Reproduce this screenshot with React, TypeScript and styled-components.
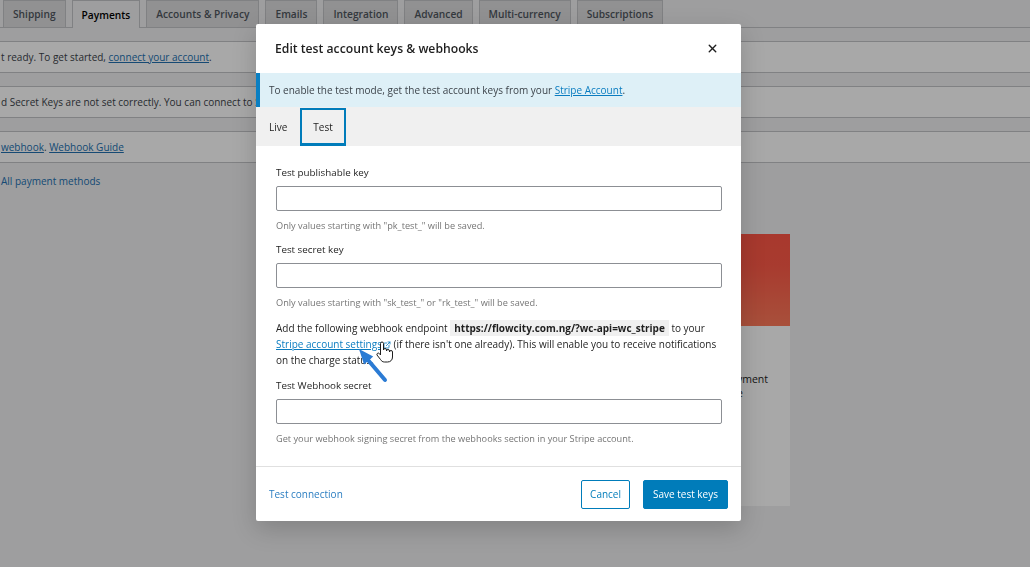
import React from "react";
import styled, { createGlobalStyle } from "styled-components";
import { X, ExternalLink } from "lucide-react";

const GlobalStyle = createGlobalStyle`
  html, body {
    margin: 0;
    padding: 0;
    width: 1030px;
    height: 567px;
    overflow: hidden;
    background: #f0f0f1;
    font-family: "Open Sans", "Noto Sans", sans-serif;
  }
`;

const Page = styled.div`
  width: 1030px;
  height: 567px;
  background: #f0f0f1;
  color: #3c434a;
`;

const TabBar = styled.nav`
  display: flex;
  gap: 6px;
  height: 28px;
  padding-left: 3px;
  border-bottom: 1px solid #c3c4c7;
  box-sizing: border-box;
`;

const PageTab = styled.div<{ $active?: boolean }>`
  display: flex;
  align-items: center;
  padding: 0 9px;
  height: ${(p) => (p.$active ? "28px" : "27px")};
  border: 1px solid #c3c4c7;
  border-bottom: none;
  background: ${(p) => (p.$active ? "#f0f0f1" : "#dcdcde")};
  color: ${(p) => (p.$active ? "#000" : "#50575e")};
  font-size: 10.2px;
  font-weight: 600;
  box-sizing: border-box;
`;

const NoticeList = styled.div`
  display: flex;
  flex-direction: column;
  gap: 13px;
  margin-top: 13px;
`;

const Notice = styled.div`
  height: 32px;
  display: flex;
  align-items: center;
  background: #fff;
  border-top: 1px solid #c3c4c7;
  border-bottom: 1px solid #c3c4c7;
  box-sizing: border-box;
  font-size: 10px;
  white-space: nowrap;
  padding-left: 1px;
`;

const PageLink = styled.a`
  color: #2271b1;
  text-decoration: underline;
`;

const AllMethods = styled.div`
  margin-top: 11px;
  font-size: 10px;
  color: #2271b1;
  padding-left: 1px;
`;

const CardRow = styled.div`
  display: flex;
  padding-left: 560px;
  margin-top: 46px;
`;

const MethodCard = styled.div`
  width: 230px;
  height: 272px;
  background: #fff;
  display: flex;
  flex-direction: column;
`;

const CardBanner = styled.div`
  height: 92px;
  background: linear-gradient(180deg, #ff5646 0%, #ff5a48 35%, #ff7a5a 100%);
`;

const CardBody = styled.div`
  padding-top: 46px;
  font-size: 10.5px;
  line-height: 14px;
  color: #1e1e1e;
  display: flex;
  flex-direction: column;
`;

const CardLine = styled.div<{ $inset: number }>`
  text-align: right;
  padding-right: ${(p) => p.$inset}px;
  white-space: nowrap;
`;

const Overlay = styled.div`
  position: fixed;
  inset: 0;
  background: rgba(0, 0, 0, 0.34);
`;

const Modal = styled.div`
  position: absolute;
  left: 256px;
  top: 24px;
  width: 485px;
  height: 497px;
  background: #fff;
  border-radius: 2px;
  box-shadow: 0 8px 24px rgba(0, 0, 0, 0.18);
  display: flex;
  flex-direction: column;
  color: #1e1e1e;
`;

const ModalHeader = styled.header`
  height: 49px;
  display: flex;
  align-items: center;
  justify-content: space-between;
  padding: 0 22px 0 19px;
  flex-shrink: 0;
`;

const ModalTitle = styled.h1`
  margin: 0;
  font-size: 12.2px;
  font-weight: 600;
  color: #1e1e1e;
`;

const CloseButton = styled.button`
  border: none;
  background: none;
  padding: 0;
  display: flex;
  color: #1e1e1e;
`;

const InfoNotice = styled.div`
  height: 34px;
  display: flex;
  align-items: center;
  background: #def0f7;
  border-left: 4px solid #0a7fc2;
  padding-left: 9px;
  font-size: 10px;
  color: #3c434a;
  flex-shrink: 0;
`;

const BlueLink = styled.a`
  color: #0a7cc0;
  text-decoration: underline;
`;

const ModeTabs = styled.div`
  height: 39px;
  display: flex;
  align-items: stretch;
  background: #f0f0f0;
  flex-shrink: 0;
`;

const ModeTab = styled.div<{ $active?: boolean }>`
  display: flex;
  align-items: center;
  padding: 0 ${(p) => (p.$active ? "11px" : "13px")};
  margin: ${(p) => (p.$active ? "1px 0 0" : "0")};
  font-size: 10px;
  font-weight: 500;
  color: #1e1e1e;
  border: ${(p) => (p.$active ? "2px solid #007cba" : "none")};
  border-bottom-width: ${(p) => (p.$active ? "3px" : "0")};
  box-sizing: border-box;
`;

const ModalBody = styled.div`
  padding: 19px 19px 11px 20px;
  border-bottom: 1px solid #e0e0e0;
  display: flex;
  flex-direction: column;
`;

const FieldLabel = styled.label`
  font-size: 9.8px;
  line-height: 16px;
  color: #1e1e1e;
  margin-bottom: 5px;
`;

const TextInput = styled.input`
  height: 25px;
  box-sizing: border-box;
  border: 1px solid #8c8f94;
  border-radius: 2px;
  width: 100%;
  margin: 0;
`;

const Help = styled.p`
  margin: 8px 0 9px;
  font-size: 9.2px;
  line-height: 14px;
  color: #757575;
`;

const Instructions = styled.p`
  margin: 1px 0 10px;
  font-size: 10px;
  line-height: 16px;
  color: #1e1e1e;
  white-space: nowrap;
`;

const Endpoint = styled.code`
  font-family: "Open Sans", "Noto Sans", sans-serif;
  font-weight: 700;
  background: #f0f0f0;
  padding: 1px 4px;
`;

const ExtIcon = styled(ExternalLink)`
  vertical-align: -1px;
  margin-left: 1px;
`;

const ModalFooter = styled.footer`
  flex: 1;
  display: flex;
  align-items: center;
  justify-content: space-between;
  padding: 0 13px;
`;

const FooterLink = styled.a`
  font-size: 10px;
  color: #2a7dc1;
  text-decoration: none;
`;

const ButtonGroup = styled.div`
  display: flex;
  gap: 13px;
`;

const Button = styled.button<{ $primary?: boolean }>`
  height: 29px;
  padding: 0 ${(p) => (p.$primary ? "9px" : "8px")};
  border-radius: 2px;
  font-family: inherit;
  font-size: 10px;
  border: 1px solid #007cba;
  background: ${(p) => (p.$primary ? "#007cba" : "#fff")};
  color: ${(p) => (p.$primary ? "#fff" : "#007cba")};
`;

const Pointer = styled.svg`
  position: absolute;
  left: 340px;
  top: 335px;
  overflow: visible;
`;

const tabs = [
  "Shipping",
  "Payments",
  "Accounts & Privacy",
  "Emails",
  "Integration",
  "Advanced",
  "Multi-currency",
  "Subscriptions",
];

export default function App() {
  return (
    <>
      <GlobalStyle />
      <Page>
        <TabBar>
          {tabs.map((t) => (
            <PageTab key={t} $active={t === "Payments"}>
              {t}
            </PageTab>
          ))}
        </TabBar>
        <NoticeList>
          <Notice>
            t ready. To get started,&nbsp;<PageLink>connect your account</PageLink>.
          </Notice>
          <Notice>
            d Secret Keys are not set correctly. You can connect to Stripe with a new account.
          </Notice>
          <Notice>
            <PageLink>webhook</PageLink>.&nbsp;<PageLink>Webhook Guide</PageLink>
          </Notice>
        </NoticeList>
        <AllMethods>All payment methods</AllMethods>
        <CardRow>
          <MethodCard>
            <CardBanner />
            <CardBody>
              <CardLine $inset={22}>Accept credit card payment</CardLine>
              <CardLine $inset={47}>methods from one place</CardLine>
            </CardBody>
          </MethodCard>
        </CardRow>
      </Page>
      <Overlay />
      <Modal>
        <ModalHeader>
          <ModalTitle>Edit test account keys &amp; webhooks</ModalTitle>
          <CloseButton aria-label="Close">
            <X size={13} strokeWidth={2.6} />
          </CloseButton>
        </ModalHeader>
        <InfoNotice>
          To enable the test mode, get the test account keys from your&nbsp;
          <BlueLink>Stripe Account</BlueLink>.
        </InfoNotice>
        <ModeTabs>
          <ModeTab>Live</ModeTab>
          <ModeTab $active>Test</ModeTab>
        </ModeTabs>
        <ModalBody>
          <FieldLabel>Test publishable key</FieldLabel>
          <TextInput />
          <Help>Only values starting with "pk_test_" will be saved.</Help>
          <FieldLabel>Test secret key</FieldLabel>
          <TextInput />
          <Help>Only values starting with "sk_test_" or "rk_test_" will be saved.</Help>
          <Instructions>
            Add the following webhook endpoint <Endpoint>https://flowcity.com.ng/?wc-api=wc_stripe</Endpoint> to your
            <br />
            <BlueLink>Stripe account settings</BlueLink>
            <ExtIcon size={8} color="#0a7cc0" strokeWidth={2.5} /> (if there isn't one already). This will enable you to
            receive notifications
            <br />
            on the charge status.
          </Instructions>
          <FieldLabel>Test Webhook secret</FieldLabel>
          <TextInput />
          <Help>Get your webhook signing secret from the webhooks section in your Stripe account.</Help>
        </ModalBody>
        <ModalFooter>
          <FooterLink>Test connection</FooterLink>
          <ButtonGroup>
            <Button>Cancel</Button>
            <Button $primary>Save test keys</Button>
          </ButtonGroup>
        </ModalFooter>
      </Modal>
      <Pointer width="52" height="48" viewBox="0 0 52 48">
        <g transform="translate(36 7)">
          <path
            d="M4.5 1.5a1.5 1.5 0 0 1 3 0V8a1.5 1.5 0 0 1 3 0v1a1.5 1.5 0 0 1 3 0v1a1.5 1.5 0 0 1 3 0V15c0 3-2 5-5 5h-3c-2 0-3-1-4-2.5L1 13a1.4 1.4 0 0 1 2.2-1.6L4.5 13Z"
            fill="#fff"
            stroke="#1e1e1e"
            strokeWidth="1"
            strokeLinejoin="round"
          />
        </g>
        <line x1="45" y1="45" x2="28" y2="25" stroke="#2b7bd4" strokeWidth="4" strokeLinecap="round" />
        <polygon points="19,14 33.2,21.6 24,29.4" fill="#2b7bd4" />
      </Pointer>
    </>
  );
}
